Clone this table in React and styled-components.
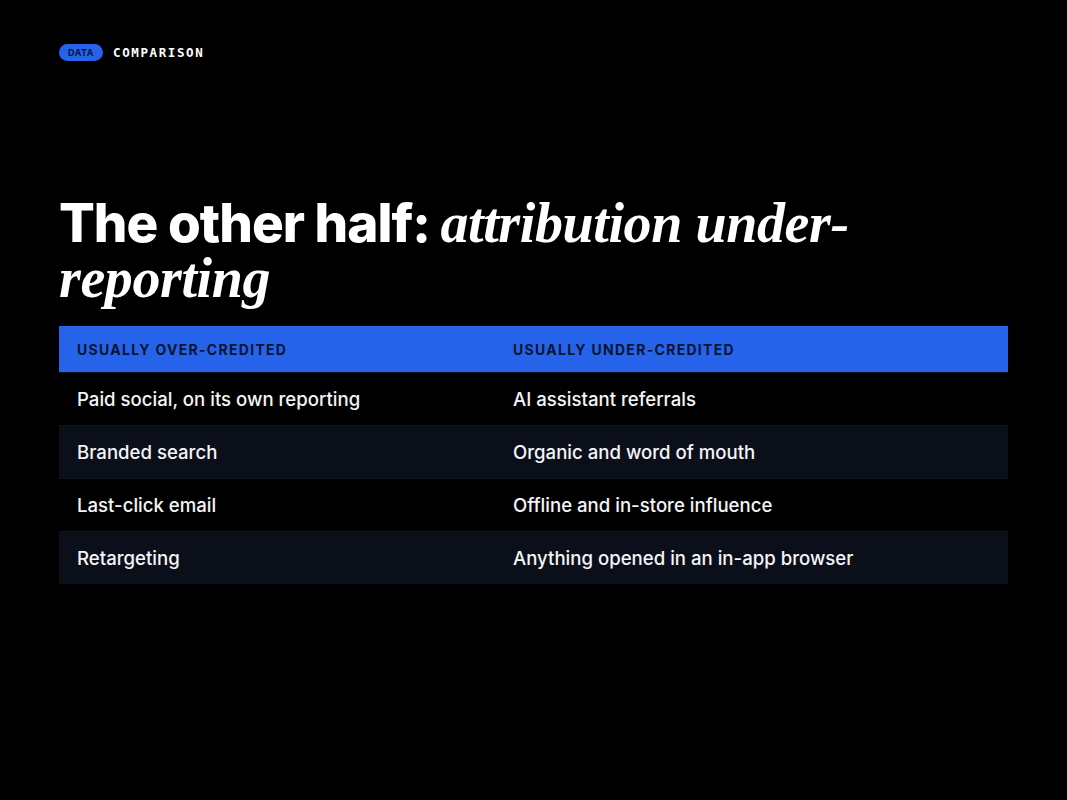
import React from "react";
import styled, { createGlobalStyle } from "styled-components";

const GlobalStyle = createGlobalStyle`
  html, body {
    margin: 0;
    padding: 0;
    background: #000;
  }
`;

const Slide = styled.div`
  width: 1067px;
  height: 800px;
  box-sizing: border-box;
  padding: 44px 59px 0 59px;
  background: #000;
  color: #fff;
  font-family: Inter, "Noto Sans", sans-serif;
  display: flex;
  flex-direction: column;
`;

const Eyebrow = styled.div`
  display: flex;
  align-items: center;
  gap: 10px;
`;

const Tag = styled.span`
  display: inline-flex;
  align-items: center;
  justify-content: center;
  width: 44px;
  height: 17px;
  border-radius: 9px;
  background: #2563eb;
  color: #0b1530;
  font-size: 9px;
  font-weight: 700;
  letter-spacing: 0.5px;
`;

const Kicker = styled.span`
  font-family: "DejaVu Sans Mono", "Liberation Mono", monospace;
  font-size: 12.5px;
  font-weight: 700;
  letter-spacing: 1.6px;
  color: #fff;
`;

const Headline = styled.h1`
  margin: 135px 0 0 0;
  font-size: 53px;
  line-height: 55px;
  font-weight: 800;
  letter-spacing: -1px;
  max-width: 830px;
`;

const Accent = styled.em`
  font-family: "Liberation Serif", "DejaVu Serif", serif;
  font-style: italic;
  font-weight: 700;
  font-size: 56px;
  letter-spacing: -0.4px;
`;

const Table = styled.div`
  margin-top: 20px;
  display: grid;
  grid-template-columns: 436px 1fr;
`;

const HeadCell = styled.div`
  background: #2563eb;
  height: 46px;
  display: flex;
  align-items: center;
  padding-left: 18px;
  font-size: 14px;
  font-weight: 700;
  letter-spacing: 1.3px;
  color: #0b1530;
`;

const Cell = styled.div`
  height: 52px;
  display: flex;
  align-items: center;
  padding-left: 18px;
  font-size: 18.6px;
  font-weight: 500;
  color: #f4f5f7;
  background: ${(p) => (p.$alt ? "#0b0f1a" : "#000")};
  border-top: 1px solid #111522;
`;

const rows = [
  ["Paid social, on its own reporting", "AI assistant referrals"],
  ["Branded search", "Organic and word of mouth"],
  ["Last-click email", "Offline and in-store influence"],
  ["Retargeting", "Anything opened in an in-app browser"],
];

const App = () => {
  return (
    <>
      <GlobalStyle />
      <Slide>
        <Eyebrow>
          <Tag>DATA</Tag>
          <Kicker>COMPARISON</Kicker>
        </Eyebrow>
        <Headline>
          The other half: <Accent>attribution under-reporting</Accent>
        </Headline>
        <Table>
          <HeadCell>USUALLY OVER-CREDITED</HeadCell>
          <HeadCell>USUALLY UNDER-CREDITED</HeadCell>
          {rows.map(([left, right], i) => (
            <React.Fragment key={left}>
              <Cell $alt={i % 2 === 1}>{left}</Cell>
              <Cell $alt={i % 2 === 1}>{right}</Cell>
            </React.Fragment>
          ))}
        </Table>
      </Slide>
    </>
  );
};

export default App;
